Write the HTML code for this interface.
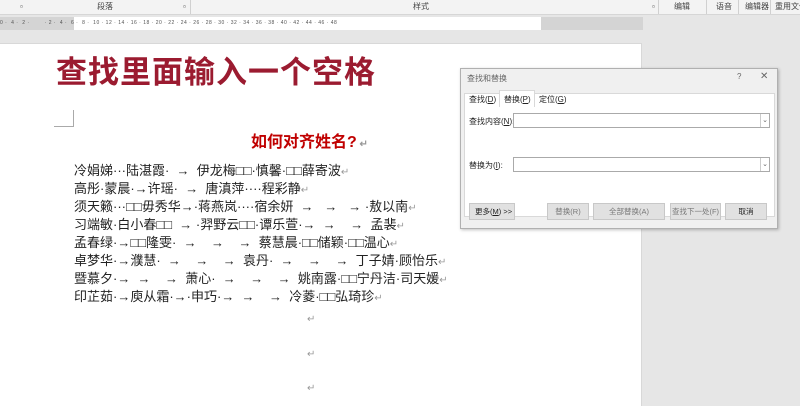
<!DOCTYPE html>
<html><head><meta charset="utf-8"><style>
*{margin:0;padding:0;box-sizing:border-box}
html,body{width:800px;height:406px;overflow:hidden}
body{background:#e6e6e6;position:relative;font-family:"Liberation Sans","Noto Sans CJK SC",sans-serif}
.a{position:absolute}
.rib{left:0;top:0;width:800px;height:15px;background:#f3f3f3;border-bottom:1px solid #d6d6d6;font-size:8px;color:#444}
.rib span{position:absolute;top:2px;white-space:nowrap;line-height:10px}
.sep{position:absolute;top:0;width:1px;height:14px;background:#d0d0d0}
.page{left:0;top:43px;width:642px;height:363px;background:#fff;border-right:1px solid #d8d8d8;border-top:1px solid #d8d8d8}
.t{font-size:13px;color:#222;left:74px}
.t div{height:18px;line-height:18px;white-space:pre}
.pm{color:#999;font-size:10px}
.dlg{left:460px;top:68px;width:318px;height:161px;background:#f0f0f0;border:1px solid #b0b0b0;box-shadow:1px 1px 3px rgba(0,0,0,.25);font-size:8px;color:#222}
.btn{position:absolute;top:134px;height:17px;border:1px solid #c8c8c8;background:#e1e1e1;font-size:7.5px;text-align:center;line-height:15px;color:#777}
.inp{position:absolute;left:52px;width:257px;height:15px;background:#fff;border:1px solid #aaa}
.inp i{position:absolute;right:0;top:0;width:9px;height:13px;border-left:1px solid #ccc;font-style:normal;font-size:7px;line-height:13px;text-align:center;color:#666}
</style></head><body>
<div class="a rib">
<span style="left:20px">▫</span><span style="left:97px">段落</span><span style="left:183px">▫</span><span style="left:413px">样式</span><span style="left:652px">▫</span>
<span style="left:674px">编辑</span><span style="left:716px">语音</span><span style="left:745px">编辑器</span><span style="left:775px">重用文件</span>
<div class="sep" style="left:190px"></div><div class="sep" style="left:658px"></div><div class="sep" style="left:706px"></div><div class="sep" style="left:738px"></div><div class="sep" style="left:770px"></div>
</div>
<div class="a" style="left:0;top:17px;width:643px;height:13px;background:#d4d4d4"></div>
<div class="a" style="left:74px;top:17px;width:467px;height:13px;background:#fff"></div>
<div class="a" style="left:0;top:19px;width:643px;font-size:5px;line-height:8px;color:#555;white-space:pre;letter-spacing:.5px">0 ·  4 ·  2 ·        · 2 ·  4 ·  6 ·  8 ·  10 · 12 · 14 · 16 · 18 · 20 · 22 · 24 · 26 · 28 · 30 · 32 · 34 · 36 · 38 · 40 · 42 · 44 · 46 · 48</div>
<div class="a page"></div>
<div class="a" style="left:56px;top:55px;font-size:31px;line-height:36px;font-weight:bold;color:#9b1b30;letter-spacing:1px;white-space:nowrap">查找里面输入一个空格</div>
<div class="a" style="left:54px;top:110px;width:20px;height:17px;border-right:1px solid #aaa;border-bottom:1px solid #aaa"></div>
<div class="a" style="left:251px;top:133px;font-size:16px;line-height:20px;font-weight:bold;color:#c00000;white-space:nowrap">如何对齐姓名?<span class="pm"> ↵</span></div>
<div class="a t" style="top:162px"><div>冷娟娣···陆湛霞·  →  伊龙梅□□·慎馨·□□薛寄波<span class="pm">↵</span></div><div>高彤·蒙晨·→许瑶·  →  唐滇萍····程彩静<span class="pm">↵</span></div><div>须天籁···□□毋秀华→·蒋燕岚····宿余妍  →   →   → ·敖以南<span class="pm">↵</span></div><div>习端敏·白小春□□  → ·羿野云□□·谭乐萱·→  →    →  孟裴<span class="pm">↵</span></div><div>孟春绿·→□□隆雯·  →    →    →  蔡慧晨·□□储颖·□□温心<span class="pm">↵</span></div><div>卓梦华·→濮慧·  →    →    →  袁丹·  →    →    →  丁子婧·顾怡乐<span class="pm">↵</span></div><div>暨慕夕·→  →    →  萧心·  →    →    →  姚南露·□□宁丹洁·司天媛<span class="pm">↵</span></div><div>印芷茹·→庾从霜·→·申巧·→  →    →  冷菱·□□弘琦珍<span class="pm">↵</span></div></div>
<div class="a pm" style="left:307px;top:314px">↵</div>
<div class="a pm" style="left:307px;top:349px">↵</div>
<div class="a pm" style="left:307px;top:383px">↵</div>
<div class="a dlg">
<div class="a" style="left:6px;top:4px;color:#666">查找和替换</div>
<div class="a" style="left:276px;top:3px;color:#666">?</div><div class="a" style="left:299px;top:2px;color:#666;font-size:10px">✕</div>
<div class="a" style="left:3px;top:24px;width:311px;height:124px;background:#fff;border:1px solid #d9d9d9"></div>
<div class="a" style="left:8px;top:25px">查找(<u>D</u>)</div>
<div class="a" style="left:38px;top:21px;width:36px;height:17px;background:#fff;border:1px solid #d9d9d9;border-bottom:none;padding:3px 0 0 4px">替换(<u>P</u>)</div>
<div class="a" style="left:78px;top:25px">定位(<u>G</u>)</div>
<div class="a" style="left:8px;top:47px">查找内容(<u>N</u>):</div>
<div class="inp" style="top:44px"><i>⌄</i></div>
<div class="a" style="left:8px;top:91px">替换为(<u>I</u>):</div>
<div class="inp" style="top:88px"><i>⌄</i></div>
<div class="btn" style="left:8px;width:46px;color:#222;text-align:left;padding-left:5px">更多(<u>M</u>) &gt;&gt;</div>
<div class="btn" style="left:86px;width:42px">替换(R)</div>
<div class="btn" style="left:132px;width:72px">全部替换(A)</div>
<div class="btn" style="left:209px;width:51px">查找下一处(F)</div>
<div class="btn" style="left:264px;width:42px;color:#222">取消</div>
</div>
</body></html>
